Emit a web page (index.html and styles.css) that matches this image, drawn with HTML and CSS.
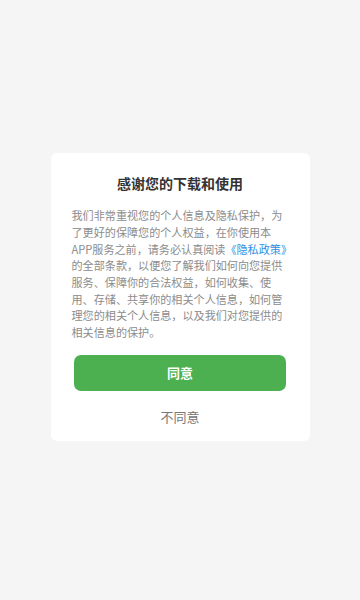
FILE: index.html
```html
<!DOCTYPE html>
<html lang="zh-CN">
<head>
<meta charset="utf-8">
<meta name="viewport" content="width=device-width, initial-scale=1">
<title>隐私政策</title>
<link rel="stylesheet" href="styles.css">
</head>
<body>
<main class="screen">
  <section class="dialog">
    <h1 class="dialog-title">感谢您的下载和使用</h1>
    <p class="dialog-text">我们非常重视您的个人信息及隐私保护，为了更好的保障您的个人权益，在你使用本<br>APP服务之前，请务必认真阅读<a class="policy-link" href="#">《隐私政策》</a>的全部条款，以便您了解我们如何向您提供服务、保障你的合法权益，如何收集、使用、存储、共享你的相关个人信息，如何管理您的相关个人信息，以及我们对您提供的相关信息的保护。</p>
    <button class="btn-agree" type="button">同意</button>
    <button class="btn-disagree" type="button">不同意</button>
  </section>
</main>
</body>
</html>
```

FILE: styles.css
```css
* {
  box-sizing: border-box;
}

html, body {
  margin: 0;
  padding: 0;
}

body {
  background: #f5f5f5;
  font-family: "Noto Sans CJK SC", "Noto Sans", sans-serif;
}

.screen {
  min-height: 600px;
  display: flex;
  align-items: center;
  justify-content: center;
  padding-bottom: 6px;
}

.dialog {
  width: 259px;
  background: #ffffff;
  border-radius: 6px;
  padding: 20px 0 14px;
  display: flex;
  flex-direction: column;
  align-items: center;
}

.dialog-title {
  margin: 0 0 14px;
  font-size: 14px;
  line-height: 20px;
  font-weight: 700;
  color: #333333;
  text-align: center;
}

.dialog-text {
  align-self: stretch;
  margin: 0;
  padding: 0 17px 0 21px;
  font-size: 11.1px;
  line-height: 16.7px;
  color: #8c8c8c;
  text-spacing-trim: space-all;
  line-break: strict;
}

.policy-link {
  color: #2f8de4;
  text-decoration: none;
}

.btn-agree {
  width: 212px;
  height: 36px;
  margin-top: 14px;
  border: none;
  border-radius: 7px;
  background: #4caf50;
  color: #ffffff;
  font-family: inherit;
  font-size: 13px;
  font-weight: 700;
  padding: 0;
}

.btn-disagree {
  margin-top: 16px;
  border: none;
  background: none;
  padding: 0;
  font-family: inherit;
  font-size: 13px;
  line-height: 20px;
  color: #777777;
}
```
